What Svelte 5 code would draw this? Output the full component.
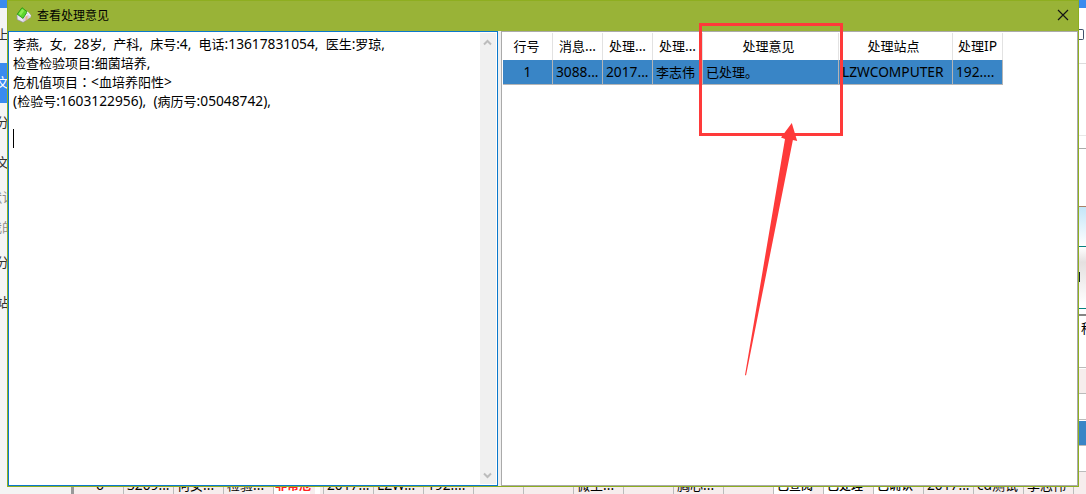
<script>
  const lines = [
    '李燕,  女,  28岁,  产科,  床号:4,  电话:13617831054,  医生:罗琼,',
    '检查检验项目:细菌培养,',
    '危机值项目：<血培养阳性>',
    '(检验号:1603122956),  (病历号:05048742),'
  ];
  // Latin runs use a slightly larger face; the full-width colon is centred in its cell
  const runs = (s) =>
    s.match(/[\x20-\x7e]+|：|[^\x20-\x7e：]+/g).map((t) => ({ t, latin: t.charCodeAt(0) < 128, colon: t === '：' }));

  const columns = [
    { head: '行号', value: '1', w: 50, center: true },
    { head: '消息...', value: '3088...', w: 50 },
    { head: '处理...', value: '2017...', w: 50 },
    { head: '处理...', value: '李志伟', w: 50 },
    { head: '处理意见', value: '已处理。', w: 136 },
    { head: '处理站点', value: 'LZWCOMPUTER', w: 114 },
    { head: '处理IP', value: '192....', w: 50 }
  ];

  const menu = [
    { t: '上', h: 55 },
    { t: '文', h: 40, kind: 'active' },
    { t: '分', h: 40 },
    { t: '文', h: 40 },
    { t: '默认', h: 30, kind: 'dim' },
    { t: '我的', h: 30, kind: 'dim' },
    { t: '分', h: 40 },
    { t: '站', h: 40 }
  ];

  const under = [
    { t: '6', k: 'mid' }, { t: '3209...' }, { t: '何女...' }, { t: '检验...' }, { t: '非常危', k: 'alert' },
    { t: '2017...' }, { t: 'LZW...' }, { t: '192....' }, { t: '' }, { t: '' }, { t: '微生...' }, { t: '' },
    { t: '胸心...' }, { t: '' }, { t: '已查阅', k: 'white' }, { t: '已处理', k: 'white' }, { t: '已确认', k: 'white' },
    { t: '2017...' }, { t: 'cd测试' }, { t: '李志伟' }, { t: '' }
  ];
</script>

{#snippet mixed(s)}{#each runs(s) as r}<span class:latin={r.latin} class:colon={r.colon}>{r.t}</span>{/each}{/snippet}

<div class="screen">
  <aside class="menu">
    <div class="cap"></div>
    {#each menu as m}
      <div class="item {m.kind ?? ''}" style:height="{m.h}px"><span>{m.t}</span></div>
    {/each}
  </aside>

  <div class="right">
    <div class="cap"></div>
    <div class="tools"><i></i></div>
    <div class="band b1"></div>
    <div class="band b2"></div>
    <div class="band b3"></div>
    <div class="band sky"></div>
    <div class="band grey"><i></i></div>
    <div class="band head"><span>科</span></div>
    <div class="band pink"></div>
    <div class="band white"></div>
    <div class="band sel"></div>
    <div class="band plain"></div>
    <div class="band last"></div>
  </div>

  <div class="under">
    {#each under as u}
      <div class="ucell {u.k ?? ''}">{#if u.t}{@render mixed(u.t)}{/if}</div>
    {/each}
  </div>

  <section class="dialog">
    <header>
      <svg class="logo" width="16" height="16" viewBox="0 0 16 16">
        <path d="M1 8 6 4l8 3 .8 3L7 15.300 1.200 12.500z" fill="#e9e8f3" stroke="#9a92ae" stroke-width=".7" />
        <path d="m7 11 6.500-4 1.200 3L7 15z" fill="#d9cfdf" />
        <path d="m9.500 9.700 2-1.300v4l-2 1.400z" fill="#e8b47f" />
        <path d="M1.200 7.200 6 .7l5.200 4.100L7 11.400z" fill="#5ed52c" stroke="#279b16" stroke-width=".9" />
        <path d="m2.800 6.500 3.500-4.600 2 1.600-3.500 4.900z" fill="#8bed52" />
        <path d="m11.200 4.800 3.300 4.400" stroke="#f5f2fa" stroke-width="1.300" />
      </svg>
      <h1>查看处理意见</h1>
      <svg class="close" width="12" height="12" viewBox="0 0 12 12"><path d="m1 1 10 10M11 1 1 11" stroke="#151515" stroke-width="1.15" /></svg>
    </header>
    <main>
      <div class="memo">
        <div class="text">
          {#each lines as l}<p>{@render mixed(l)}</p>{/each}
          <p></p>
          <p class="caret"><i></i></p>
        </div>
        <div class="scroll">
          <svg width="9" height="7" viewBox="0 0 9 7"><path d="M1 5.5 4.5 2 8 5.5" fill="none" stroke="#bcbcbc" stroke-width="2" /></svg>
          <svg width="9" height="7" viewBox="0 0 9 7"><path d="M1 1.5 4.5 5 8 1.5" fill="none" stroke="#bcbcbc" stroke-width="2" /></svg>
        </div>
      </div>
      <div class="grid">
        <div class="row heads">
          {#each columns as c}<div class="cell" class:full={c.w > 100} style:width="{c.w}px">{@render mixed(c.head)}</div>{/each}
        </div>
        <div class="row data">
          {#each columns as c}<div class="cell" class:center={c.center} style:width="{c.w}px">{@render mixed(c.value)}</div>{/each}
        </div>
      </div>
    </main>
  </section>

  <svg class="mark" width="150" height="360" viewBox="0 0 150 360">
    <rect x="3.5" y="4.5" width="141" height="110" fill="none" stroke="#fe3a3a" stroke-width="3" />
    <path d="M94.800 103 100.200 121 95.900 120 49 355.500 48 355 88 119 84 117.500z" fill="#fe3a3a" />
  </svg>
</div>

<style>
  :global(body) { margin: 0; overflow: hidden; }
  .screen {
    position: relative; width: 1086px; height: 494px; overflow: hidden; background: #fff;
    font: 13px/19px "Noto Sans CJK SC", sans-serif; color: #000;
    display: flex; justify-content: space-between;
  }
  .latin { font-family: "Noto Sans", sans-serif; font-size: 13.75px; }
  .colon { font-family: "Noto Sans CJK TC", sans-serif; }
  .menu { width: 71px; background: #f4f4f4; height: 494px; }
  .cap { height: 8px; background: #3a8bee; }
  .item { display: flex; align-items: center; width: 9px; justify-content: flex-end; color: #333; white-space: nowrap; box-sizing: border-box; padding-bottom: 4px; }
  .item.active { background: #3a8bee; color: #fff; }
  .item.dim { color: #8c8c8c; }
  .item.dim span { margin-right: -6px; }
  .right { width: 8px; height: 494px; background: #fff; }
  .tools { height: 56px; box-sizing: border-box; padding-top: 21px; border-bottom: 1px solid #ddd; overflow: hidden; }
  .tools i { display: block; width: 4px; height: 9px; border: 1px solid #41506b; border-left: 0; border-radius: 0 2px 2px 0; margin-left: 1px; }
  .band { box-sizing: border-box; overflow: hidden; }
  .b1 { height: 72px; border-bottom: 1px solid #e8e8e8; }
  .b2 { height: 13px; border-bottom: 1px solid #aaa; }
  .b3 { height: 58px; border-bottom: 1px solid #a98267; }
  .sky { height: 40px; background: linear-gradient(#c4e6f8, #fff); border-bottom: 1px solid #078080; }
  .grey { height: 62px; padding-top: 25px; background: linear-gradient(#fff, #e4e0e0 25%, #fff 95%); border-bottom: 1px solid #078080; }
  .grey i { display: block; width: 1px; height: 9px; border-right: 1px solid #123; border-bottom: 1px solid #123; }
  .head { height: 54px; margin-top: 5px; border-top: 2px solid #858585; border-bottom: 1px solid #bbb; padding: 2px 0 0 3px; }
  .pink { height: 26px; background: #f6eded; border-top: 1px solid #fff; border-bottom: 1px solid #bbb; }
  .white { height: 26px; border-bottom: 1px solid #bbb; }
  .sel { height: 25px; margin-top: 1px; background: #3985c6; border-bottom: 1px solid #bbb; }
  .plain { height: 26px; border-bottom: 1px solid #bbb; }
  .last { height: 24px; background: #f6eded; }
  .under {
    position: absolute; left: 71px; top: 473px; width: 1015px; height: 24px; box-sizing: border-box;
    border-left: 3px solid #999; background: #f6eded; display: flex; white-space: nowrap;
  }
  .ucell { width: 50px; flex: none; box-sizing: border-box; border-right: 1px solid #bbb; padding: 2px 0 0 3px; overflow: hidden; }
  .ucell.mid { text-align: center; }
  .ucell.alert { color: #f22; font-weight: bold; font-size: 12px; padding-left: 1px; background: linear-gradient(90deg, #fff 36px, #f6eded 36px 41px, #fff 41px 46px, #f6eded 46px); }
  .ucell.white { height: auto; font-size: 12px; font-weight: 500; border-bottom: 0; background: linear-gradient(90deg, #fff 36px, #f6eded 36px); }
  .dialog {
    position: absolute; left: 7px; top: 0; width: 1072px; height: 487px; box-sizing: border-box;
    border: 1px solid #8eae20; background: #f0f0f0; display: flex; flex-direction: column;
  }
  header { height: 30px; background: #99b337; display: flex; align-items: center; padding: 0 9px 0 8px; }
  .logo { margin-right: 5px; margin-top: -2px; }
  h1 { font-size: 12px; font-weight: 400; margin: -3px 0 0; flex: 1; }
  .close { margin-top: -2px; }
  main { flex: 1; display: flex; gap: 3px; min-height: 0; }
  .memo { width: 490px; box-sizing: border-box; border: 1px solid #0a78cc; background: #fff; display: flex; padding: 1px 1px 1px 0; }
  .text { flex: 1; padding: 1px 0 0 4px; }
  p { margin: 0; height: 19px; line-height: 19px; white-space: pre; }
  .caret i { display: block; width: 1px; height: 19px; background: #000; }
  .scroll { width: 16px; background: #f0f0f0; display: flex; flex-direction: column; align-items: center; justify-content: space-between; padding: 6px 1px 5px 0; box-sizing: border-box; }
  .grid { flex: 1; box-sizing: border-box; background: #fff; border: 1px solid #aaa; padding: 1px 0 0 1px; }
  .row { display: flex; white-space: nowrap; }
  .cell { box-sizing: border-box; border-right: 1px solid #e2e2e2; flex: none; overflow: hidden; }
  .heads .cell { height: 27px; line-height: 26px; text-align: center; }
  .heads .cell:first-child { padding-right: 2px; }
  .heads .full { padding-right: 4px; }
  .data .cell { height: 25px; line-height: 24px; background: #3985c6; border-right-color: #b5b5b5; border-bottom: 1px solid #b5b5b5; padding-left: 3px; }
  .data .center { text-align: center; padding-left: 0; }
  .mark { position: absolute; left: 697px; top: 20px; }
</style>
